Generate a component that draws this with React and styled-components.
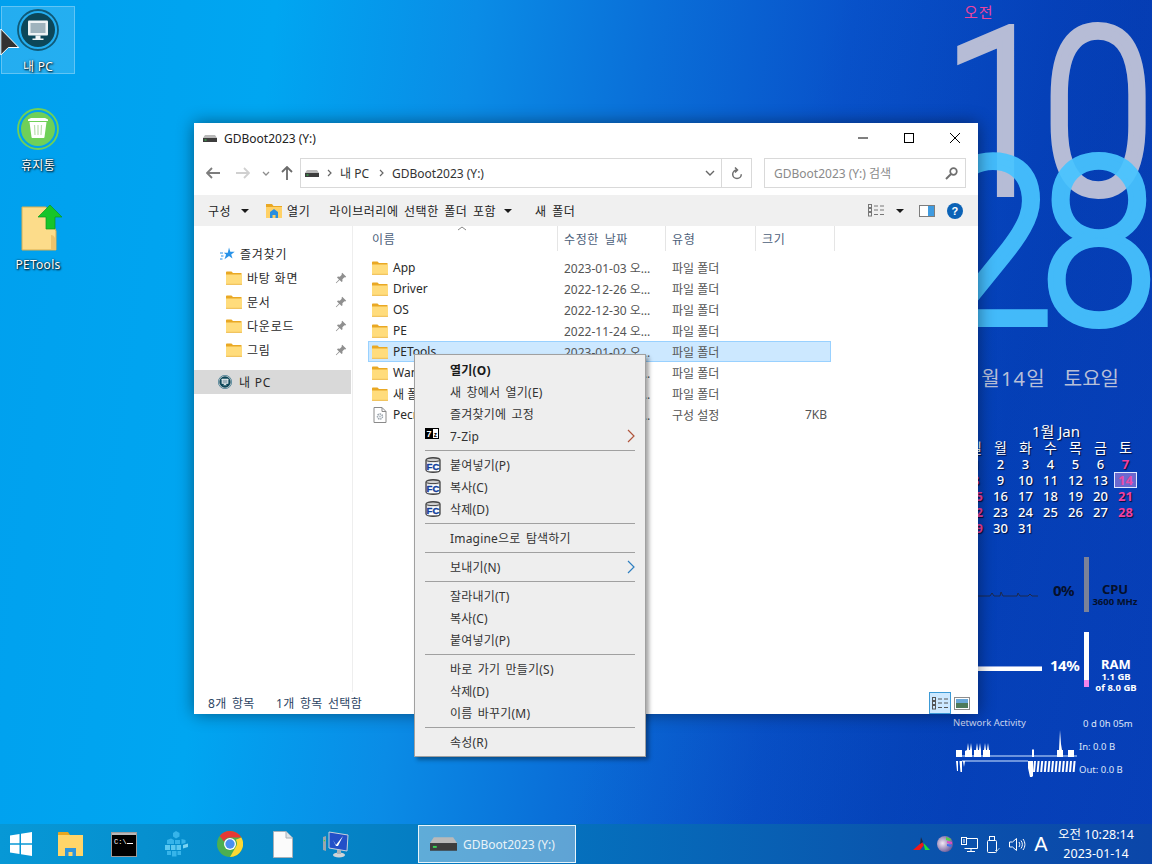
import React from 'react';
import styled, { createGlobalStyle } from 'styled-components';

const UI_FONT = '"Noto Sans", "Noto Sans CJK KR", sans-serif';

const GlobalStyle = createGlobalStyle`
  html, body { margin: 0; padding: 0; width: 1152px; height: 864px; overflow: hidden; }
  * { box-sizing: border-box; }
  body { font-family: ${UI_FONT}; font-size: 12px; }
`;

const Desktop = styled.div`
  position: relative;
  width: 1152px;
  height: 864px;
  overflow: hidden;
  background:
    linear-gradient(108deg, transparent 0 58%, rgba(0, 30, 120, 0.12) 80%, transparent 100%),
    linear-gradient(97deg, #00a0ee 0%, #00a6f1 22%, #0a8ce6 38%, #0a6fd8 52%, #0852ca 68%, #0544bf 84%, #073fb8 100%);
`;

/* desktop icons */
const IconColumn = styled.div`
  position: absolute;
  left: 1px;
  top: 6px;
  width: 74px;
  display: flex;
  flex-direction: column;
  gap: 31px;
`;
const DesktopIcon = styled.div`
  height: 68px;
  display: flex;
  flex-direction: column;
  align-items: center;
  justify-content: space-between;
  padding: 2px 0 0;
  border: 1px solid ${(p) => (p.$selected ? 'rgba(255,255,255,.28)' : 'transparent')};
  background: ${(p) => (p.$selected ? 'rgba(255,255,255,.14)' : 'transparent')};
`;
const DesktopLabel = styled.span`
  color: #fff;
  font-size: 12px;
  line-height: 14px;
  margin-bottom: -1px;
  letter-spacing: 0.3px;
  text-shadow: 1px 1px 2px #000, 0 0 2px rgba(0, 0, 0, 0.7);
`;
const ToolsGlyph = styled.svg`
  margin: -2px 0 0 8px;
  flex: none;
`;
const Cursor = styled.svg`
  position: absolute;
  left: 0;
  top: 28px;
`;

/* clock and system widgets, they sit on the wallpaper */
const BigHour = styled.div`
  position: absolute;
  left: 942px;
  top: -2px;
  font: 300 233px/233px Roboto, sans-serif;
  letter-spacing: -16.5px;
  color: #b6bcd6;
  -webkit-text-stroke: 6px #b6bcd6;
  transform: scaleX(0.88);
  transform-origin: 0 0;
  white-space: nowrap;
`;
const BigMinute = styled.div`
  position: absolute;
  left: 935px;
  top: 128px;
  font: 300 233px/233px Roboto, sans-serif;
  letter-spacing: -16px;
  color: #48c4ff;
  -webkit-text-stroke: 6px #48c4ff;
  opacity: 0.93;
  transform: scaleX(0.92);
  transform-origin: 0 0;
  white-space: nowrap;
`;
const AmPm = styled.div`
  position: absolute;
  left: 964px;
  top: 1px;
  font-size: 15px;
  line-height: 22px;
  letter-spacing: 1px;
  color: #f0439c;
`;
const DateLine = styled.div`
  position: absolute;
  left: 956px;
  top: 365px;
  display: flex;
  gap: 18px;
  font-size: 20px;
  line-height: 28px;
  white-space: nowrap;
  color: #b7bfd8;
`;
const DatePart = styled.span`
  letter-spacing: ${(p) => p.$spacing || 0}px;
`;
const Calendar = styled.div`
  position: absolute;
  left: 963px;
  top: 422px;
  width: 175px;
  color: #fff;
  text-shadow: 1px 1px 1px rgba(0, 0, 30, 0.8);
`;
const CalendarTitle = styled.div`
  font-size: 15px;
  line-height: 18px;
  text-align: center;
  padding-left: 11px;
`;
const CalendarGrid = styled.div`
  display: grid;
  grid-template-columns: repeat(7, 25px);
  grid-auto-rows: 16px;
  font-size: 13px;
  line-height: 16px;
  text-align: center;
`;
const CalendarHead = styled.span`
  font-size: 14px;
`;
const CalendarDay = styled.span`
  position: relative;
  font-weight: ${(p) => (p.$holiday ? 700 : 500)};
  color: ${(p) => (p.$holiday ? '#f2409f' : '#fff')};
  ${(p) =>
    p.$today &&
    `
    color: #e84aa8;
    text-shadow: none;
    background: rgba(168, 130, 222, .62);
    outline: 1px solid #e2e8ff;
    outline-offset: -1px;
    margin: 0 1px;
  `}
`;

const CpuGraph = styled.svg`
  position: absolute;
  left: 960px;
  top: 585px;
`;
const RamGraph = styled.svg`
  position: absolute;
  left: 960px;
  top: 666px;
`;
const UsagePercent = styled.div`
  position: absolute;
  left: ${(p) => p.$left}px;
  top: ${(p) => p.$top}px;
  font: 700 15px/22px "Noto Sans", sans-serif;
  letter-spacing: -0.5px;
  color: ${(p) => p.$color};
`;
const UsageBar = styled.div`
  position: absolute;
  left: 1084px;
  top: ${(p) => p.$top}px;
  width: 5px;
  height: 55px;
  background: ${(p) => p.$track};
`;
const UsageFill = styled.div`
  position: absolute;
  left: 0;
  right: 0;
  bottom: 0;
  height: 7px;
  background: #f284ea;
`;
const MeterLabel = styled.div`
  position: absolute;
  left: ${(p) => p.$left}px;
  top: ${(p) => p.$top}px;
  width: 60px;
  text-align: center;
  color: ${(p) => p.$color};
  font-weight: 700;
  line-height: 11px;
  font-size: 9.5px;
`;
const MeterName = styled.div`
  font-size: 13px;
  line-height: 13px;
`;
const NetworkTitle = styled.div`
  position: absolute;
  left: 953px;
  top: 716px;
  font-size: 9.5px;
  line-height: 14px;
  color: #c9d3ee;
`;
const NetworkText = styled.div`
  position: absolute;
  left: ${(p) => p.$left}px;
  top: ${(p) => p.$top}px;
  font-size: 9.5px;
  line-height: 14px;
  color: #dfe6f8;
`;
const NetworkGraph = styled.svg`
  position: absolute;
  left: 956px;
  top: 725px;
`;

/* explorer window */
const ExplorerWindow = styled.div`
  position: absolute;
  left: 194px;
  top: 123px;
  width: 784px;
  height: 591px;
  background: #fff;
  box-shadow: 0 0 16px rgba(0, 0, 0, 0.45);
  display: flex;
  flex-direction: column;
  color: #1e1e1e;
`;
const TitleBar = styled.div`
  height: 30px;
  flex: none;
  display: flex;
  align-items: center;
  padding-left: 9px;
  gap: 7px;
  font-size: 12px;
`;
const TitleText = styled.span`
  flex: 1;
  color: #222;
`;
const WindowControls = styled.div`
  display: flex;
`;
const WindowButton = styled.div`
  width: 46px;
  height: 30px;
  display: flex;
  align-items: center;
  justify-content: center;
`;
const NavRow = styled.div`
  height: 42px;
  flex: none;
  display: flex;
  align-items: flex-start;
  padding: 5px 12px 0 4px;
`;
const NavButton = styled.div`
  width: ${(p) => p.$width}px;
  height: 30px;
  display: flex;
  align-items: center;
  justify-content: center;
`;
const AddressBox = styled.div`
  width: 452px;
  height: 30px;
  margin-right: 12px;
  border: 1px solid #d9d9d9;
  display: flex;
  align-items: center;
  padding-left: 4px;
`;
const Crumb = styled.span`
  color: #333;
  margin: 0 10px 0 8px;
`;
const CrumbArrow = styled.svg`
  flex: none;
  margin-left: ${(p) => p.$lead || 0}px;
`;
const AddressEnd = styled.div`
  margin-left: auto;
  display: flex;
  height: 100%;
  align-items: center;
`;
const AddressTool = styled.div`
  width: ${(p) => p.$width}px;
  height: 100%;
  display: flex;
  align-items: center;
  justify-content: center;
  border-left: ${(p) => (p.$split ? '1px solid #d9d9d9' : '0')};
`;
const SearchBox = styled.div`
  width: 202px;
  height: 30px;
  border: 1px solid #d9d9d9;
  display: flex;
  align-items: center;
  justify-content: space-between;
  padding: 0 7px 0 9px;
  color: #8a8a8a;
`;
const CommandBar = styled.div`
  height: 31px;
  flex: none;
  background: #f0f0f0;
  display: flex;
  align-items: center;
  padding: 0 15px 0 14px;
  color: #222;
  word-spacing: 2px;
  letter-spacing: 0.5px;
`;
const Command = styled.div`
  display: flex;
  align-items: center;
  gap: ${(p) => p.$gap || 8}px;
  margin-right: ${(p) => p.$after || 0}px;
`;
const Caret = styled.span`
  width: 0;
  height: 0;
  margin: ${(p) => p.$margin || 0};
  border-left: 4px solid transparent;
  border-right: 4px solid transparent;
  border-top: 4px solid #1a1a1a;
`;
const CommandTools = styled.div`
  margin-left: auto;
  display: flex;
  align-items: center;
`;
const PaneGlyph = styled.svg`
  margin-right: 12px;
`;
const ViewBody = styled.div`
  flex: 1;
  min-height: 0;
  display: flex;
`;
const Sidebar = styled.div`
  width: 159px;
  flex: none;
  padding-top: 16px;
  border-right: 1px solid #eeeeee;
`;
const NavGroup = styled.div`
  margin-bottom: 8px;
`;
const SidebarRow = styled.div`
  height: 24px;
  width: 157px;
  display: flex;
  align-items: center;
  gap: ${(p) => p.$gap || 5}px;
  padding-left: ${(p) => p.$indent}px;
  padding-right: 4px;
  background: ${(p) => (p.$active ? '#d9d9d9' : 'transparent')};
  color: #2a2a2a;
  letter-spacing: 0.8px;
`;
const SidebarName = styled.span`
  flex: 1;
`;
const FilePane = styled.div`
  flex: 1;
  display: flex;
  flex-direction: column;
  position: relative;
`;
const HeaderRow = styled.div`
  height: 25px;
  display: flex;
  color: #4c607a;
  letter-spacing: 0.6px;
`;
const HeaderCell = styled.div`
  width: ${(p) => p.$width}px;
  height: 100%;
  padding-left: ${(p) => p.$pad}px;
  display: flex;
  align-items: center;
  border-right: 1px solid #e5e5e5;
  word-spacing: 2px;
`;
const SortMark = styled.svg`
  position: absolute;
  left: 104px;
  top: 0;
`;
const FileList = styled.div`
  padding: 6px 0 0 15px;
`;
const FileRow = styled.div`
  width: 463px;
  height: 21px;
  display: flex;
  align-items: center;
  padding-left: 3px;
  border: 1px solid ${(p) => (p.$selected ? '#99d1ff' : 'transparent')};
  background: ${(p) => (p.$selected ? '#cce8ff' : 'transparent')};
  color: #555;
`;
const FileName = styled.span`
  width: 176px;
  padding-left: 5px;
  flex: none;
  color: #2a2a2a;
`;
const FileDate = styled.span`
  width: 92px;
  margin-right: 16px;
  flex: none;
  white-space: nowrap;
  overflow: hidden;
  text-overflow: ellipsis;
`;
const FileType = styled.span`
  width: 90px;
  flex: none;
`;
const FileSize = styled.span`
  flex: 1;
  text-align: right;
  padding-right: 3px;
`;
const StatusBar = styled.div`
  height: 22px;
  flex: none;
  display: flex;
  align-items: center;
  padding-left: 14px;
  color: #2c4463;
  word-spacing: 2px;
  letter-spacing: 0.3px;
`;
const StatusText = styled.span`
  width: ${(p) => p.$width}px;
`;
const StatusViews = styled.div`
  margin-left: auto;
  display: flex;
  align-items: center;
  padding-right: 5px;
`;
const ViewToggle = styled.div`
  width: 22px;
  height: 22px;
  display: flex;
  align-items: center;
  justify-content: center;
  border: 1px solid ${(p) => (p.$on ? '#3c9ad6' : 'transparent')};
  background: ${(p) => (p.$on ? '#cce8ff' : 'transparent')};
`;

/* context menu */
const ContextMenu = styled.div`
  position: absolute;
  left: 414px;
  top: 354px;
  width: 232px;
  height: 403px;
  padding: 4px 10px 0;
  background: #eeeeee;
  border: 1px solid #a0a0a0;
  box-shadow: 3px 3px 4px rgba(0, 0, 0, 0.35);
  color: #333;
`;
const MenuItem = styled.div`
  position: relative;
  height: 22px;
  display: flex;
  align-items: center;
  padding-left: 25px;
  font-weight: ${(p) => (p.$strong ? 700 : 400)};
  color: ${(p) => (p.$strong ? '#1a1a1a' : '#333')};
  word-spacing: 2px;
  letter-spacing: 0.2px;
`;
const MenuIcon = styled.span`
  position: absolute;
  left: 0;
  top: 3px;
  display: flex;
`;
const MenuArrow = styled.svg`
  position: absolute;
  right: 0;
  top: 4px;
`;
const MenuRule = styled.div`
  height: 1px;
  margin: 3px 0;
  background: #a0a0a0;
`;

/* taskbar */
const Taskbar = styled.div`
  position: absolute;
  left: 0;
  right: 0;
  bottom: 0;
  height: 40px;
  display: flex;
  align-items: center;
  background: linear-gradient(90deg, #0798d6 0%, #0588c8 25%, #0570bd 50%, #0a55ad 78%, #0b46a9 100%);
`;
const StartButton = styled.div`
  width: 44px;
  height: 100%;
  flex: none;
  display: flex;
  align-items: center;
  justify-content: center;
  padding-right: 3px;
`;
const TaskIcon = styled.div`
  width: 53px;
  height: 100%;
  flex: none;
  display: flex;
  align-items: center;
  justify-content: center;
`;
const ActiveTask = styled.div`
  width: 158px;
  height: 38px;
  margin-left: 56px;
  flex: none;
  display: flex;
  align-items: center;
  gap: 6px;
  padding-left: 11px;
  background: rgba(255, 255, 255, 0.36);
  border: 1px solid #e8f4fa;
  color: #e9f3f8;
`;
const Tray = styled.div`
  margin-left: auto;
  height: 100%;
  display: flex;
  align-items: center;
`;
const TraySlot = styled.div`
  width: ${(p) => p.$width}px;
  display: flex;
  justify-content: center;
  color: #fff;
`;
const TrayLetter = styled.span`
  font: 400 20px/24px "Liberation Sans", sans-serif;
`;
const TrayClock = styled.div`
  width: 84px;
  margin: 0 14px 0 1px;
  text-align: center;
  white-space: nowrap;
  color: #fff;
  font-size: 12.5px;
  line-height: 19px;
`;

const DriveIcon = ({ w = 14, h = 7 }) => (
  <svg width={w} height={h} viewBox="0 0 14 7">
    <path d="M2 0h10l2 3H0z" fill="#b9b9b9" />
    <rect y="3" width="14" height="4" fill="#3d3d3d" />
    <rect x="1.500" y="4.500" width="2" height="1" fill="#39d353" />
  </svg>
);

const FolderIcon = ({ w = 16, h = 14 }) => (
  <svg width={w} height={h} viewBox="0 0 16 14">
    <path d="M0 1.500C0 .8.5.5 1 .5h4.500L7 2h8.500v2H0z" fill="#e9a824" />
    <path d="M0 3.600h16V13c0 .5-.3.8-.8.8H.8C.3 13.800 0 13.500 0 13z" fill="#ffdc7c" />
    <path d="M0 12.800h16v1H0z" fill="#eebc52" />
  </svg>
);

const PinIcon = () => (
  <svg width="12" height="12" viewBox="0 0 12 12">
    <path d="M7.200.8l4 4-1 .8-.8-.3-2 2 .1 1.900-.9.9-2-2-3.300 3.200-.5-.5L4 7.500l-2-2 .9-.9 1.900.1 2-2-.3-.8z" fill="#8f8f8f" />
  </svg>
);

const StarIcon = () => (
  <svg width="15" height="14" viewBox="0 0 15 14">
    <path d="M9 .5l1.300 4.200 4.400.1-3.500 2.600 1.300 4.200L9 9.100l-4.500 3.100 1.600-4.700-2.300-1.700 4-.1z" fill="#2a93e8" />
    <path d="M0 6h3M1 9h2.500M0 12h2.500" stroke="#2a93e8" strokeWidth="1" />
  </svg>
);

const PcBadge = ({ size = 42 }) => (
  <svg width={size} height={size} viewBox="0 0 42 42">
    <circle cx="21" cy="21" r="20" fill="none" stroke="#0f5a78" strokeWidth="1.800" />
    <circle cx="21" cy="21" r="17" fill="#0c4759" />
    <rect x="11" y="11.500" width="20" height="15" rx="1" fill="#eef3f5" />
    <rect x="13.500" y="14" width="15" height="10" fill="#9fb3bd" />
    <path d="M18.500 26.500h5v3h3v1.500h-11v-1.500h3z" fill="#eef3f5" />
  </svg>
);

const TrashBadge = () => (
  <svg width="42" height="42" viewBox="0 0 42 42">
    <circle cx="21" cy="21" r="20" fill="none" stroke="#6fd058" strokeWidth="1.800" />
    <circle cx="21" cy="21" r="17" fill="#6fd058" />
    <path d="M11 11.500l3-1.500h14l3 1.500v1.500H11z" fill="#fff" />
    <path d="M12.500 14h17l-2 15c0 .7-.6 1-1.200 1H15.700c-.6 0-1.200-.3-1.200-1z" fill="#fff" />
    <path d="M17.500 17l.5 10M21 17v10M24.500 17l-.5 10" stroke="#b9dfae" strokeWidth="1.200" />
  </svg>
);

const ToolsShortcut = () => (
  <ToolsGlyph width="42" height="46" viewBox="0 0 42 46">
    <path d="M1 2h24l10 24v19H1z" fill="#fcdc8a" stroke="#d8ae50" strokeWidth="1" />
    <path d="M30 30c2 0 3 1 4 3l1 12h-5z" fill="#ecc36c" />
    <path d="M29 0l12 12h-7v12h-9V12h-8z" fill="#16c52a" stroke="#0c9a1c" strokeWidth=".7" />
  </ToolsGlyph>
);

const FileCog = () => (
  <svg width="16" height="16" viewBox="-1.500 0 16 16">
    <path d="M.5.5h8l4 4v11H.5z" fill="#fff" stroke="#8a8a8a" />
    <path d="M8.500.5v4h4" fill="none" stroke="#8a8a8a" />
    <circle cx="6.500" cy="9.500" r="2.500" fill="none" stroke="#98a2ab" strokeWidth="1.500" strokeDasharray="1.500 .7" />
    <circle cx="6.500" cy="9.500" r="1" fill="#b8c0c8" />
  </svg>
);

const FcIcon = () => (
  <svg width="16" height="16" viewBox="0 0 16 16">
    <path d="M1 3c0-3 14-3 14 0v10c0 3-14 3-14 0z" fill="#cfcfcf" stroke="#444" strokeWidth="1.300" />
    <path d="M1.500 3.500c2 1.500 11 1.500 13 0" fill="none" stroke="#444" />
    <rect x="2" y="5.500" width="12" height="8.500" fill="#fff" />
    <text x="8" y="13" textAnchor="middle" fontFamily="Liberation Sans, sans-serif" fontWeight="700" fontSize="9.500" stroke="#123e9c" strokeWidth=".4" fill="#123e9c">FC</text>
  </svg>
);

const SevenZipIcon = () => (
  <svg width="14" height="11" viewBox="0 0 14 11">
    <rect width="14" height="11" fill="#000" />
    <rect x="8" y="1" width="5" height="9" fill="#fff" />
    <text x="4" y="9" textAnchor="middle" fontFamily="Liberation Sans, sans-serif" fontWeight="700" fontSize="9" fill="#fff">7</text>
    <text x="10.500" y="8.500" textAnchor="middle" fontFamily="Liberation Sans, sans-serif" fontWeight="700" fontSize="6.500" fill="#000">z</text>
  </svg>
);

const OpenFolderIcon = () => (
  <svg width="16" height="16" viewBox="0 0 16 16">
    <path d="M0 1h6l1.500 2H16v3H0z" fill="#e9a824" />
    <path d="M0 4h16v11H0z" fill="#ffd166" />
    <path d="M4 15v-6l4-3 4 3v6H9.500v-3h-3v3z" fill="#2a8fe0" />
  </svg>
);

const DetailsGlyph = ({ color = '#777' }) => (
  <svg width="16" height="13" viewBox="0 0 16 13">
    <g fill="none" stroke={color}>
      <rect x=".5" y=".5" width="3" height="3" />
      <rect x=".5" y="4.500" width="3" height="3" />
      <rect x=".5" y="8.500" width="3" height="3.500" />
      <path d="M6 2h4M12 2h4M6 6h4M12 6h4M6 10.500h4M12 10.500h4" />
    </g>
  </svg>
);

const Nav = {
  Back: () => (
    <svg width="14" height="12" viewBox="0 0 14 12">
      <path d="M6 1L1 6l5 5M1 6h13" fill="none" stroke="#7d7d7d" strokeWidth="1.800" />
    </svg>
  ),
  Forward: () => (
    <svg width="14" height="12" viewBox="0 0 14 12">
      <path d="M8 1l5 5-5 5M13 6H0" fill="none" stroke="#d0d0d0" strokeWidth="1.800" />
    </svg>
  ),
  Recent: () => (
    <svg width="8" height="5" viewBox="0 0 8 5">
      <path d="M1 1l3 3 3-3" fill="none" stroke="#8d8d8d" strokeWidth="1.300" />
    </svg>
  ),
  Up: () => (
    <svg width="12" height="14" viewBox="0 0 12 14">
      <path d="M1 6l5-5 5 5M6 1v13" fill="none" stroke="#6b6b6b" strokeWidth="1.800" />
    </svg>
  ),
};

const WindowsLogo = () => (
  <svg width="22" height="24" viewBox="0 0 22 24">
    <path d="M0 3.500L9.500 2v9.300H0zM11 1.700L22 0v11.300H11zM0 12.700h9.500V22L0 20.500zM11 12.700h11V24l-11-1.800z" fill="#fff" />
  </svg>
);

const ExplorerTaskIcon = () => (
  <svg width="25" height="24" viewBox="0 0 25 24">
    <path d="M0 1c0-.6.4-1 1-1h9l2 3v3H0z" fill="#e8a61f" />
    <path d="M0 3h25v21H0z" fill="#ffd569" />
    <path d="M7 24v-8h11v8h-3.500v-4h-4v4z" fill="#2f95dc" />
  </svg>
);

const CmdIcon = () => (
  <svg width="26" height="25" viewBox="0 0 26 25">
    <rect x=".5" y=".5" width="25" height="24" fill="#000" stroke="#9a9a9a" />
    <rect x="1" y="1" width="24" height="2" fill="#b8b8b8" />
    <text x="3" y="12" fontFamily="Liberation Mono, monospace" fontSize="7" fill="#fff">C:\</text>
    <rect x="16" y="11" width="6" height="1" fill="#fff" />
  </svg>
);

const CubesIcon = () => (
  <svg width="24" height="27" viewBox="0 0 24 27">
    <g fill="#36b4ea">
      <path d="M11 0l3.500 2v3.500L11 7.500 8 5.500V2z" />
      <path d="M2 9l4-1.500L9 9v4H2zM10 9h5v4h-5zM16.500 8l4 1v3l-4 1z" />
      <path d="M0 14h5v5H0zM6 14h4.500v5H6zM11.500 14H16v5h-4.500z" fill="#5cc8f0" />
      <path d="M2 20h4v4H2zM7 20h4.500v5.500H7zM12.500 20H16v4h-3.500z" />
      <path d="M18 14l5-1.500V16l-5 1.500z" fill="#7ad4f2" />
    </g>
  </svg>
);

const ChromeIcon = () => (
  <svg width="26" height="26" viewBox="0 0 26 26">
    <circle cx="13" cy="13" r="13" fill="#4caf50" />
    <path d="M13 0a13 13 0 0 1 11.300 6.500H13a6.500 6.500 0 0 0-6 4L2.700 5A13 13 0 0 1 13 0z" fill="#e53935" />
    <path d="M24.300 6.500A13 13 0 0 1 13 26l5.600-9.700a6.500 6.500 0 0 0 .2-7.500z" fill="#fdd835" />
    <circle cx="13" cy="13" r="6" fill="#fff" />
    <circle cx="13" cy="13" r="4.700" fill="#4a8ff0" />
  </svg>
);

const PageIcon = () => (
  <svg width="20" height="27" viewBox="0 0 20 27">
    <path d="M.5.500H13l6.500 6.500v19.500H.5z" fill="#fbfbfb" stroke="#a8b0b8" />
    <path d="M13 .5V7h6.500" fill="#dfe3e6" stroke="#a8b0b8" />
  </svg>
);

const MonitorCheckIcon = () => (
  <svg width="26" height="27" viewBox="0 0 26 27">
    <path d="M6 1l19 3-1 16-18-3z" fill="#2350c8" stroke="#c9d2dc" />
    <path d="M10 9l3 5 7-9-5 10h-2z" fill="#fff" />
    <ellipse cx="16" cy="24" rx="6" ry="2.500" fill="#cfd4d8" />
    <path d="M14 19h4v4h-4z" fill="#aab2b8" />
    <path d="M0 6l3-1v15l-3-1z" fill="#9aa6ad" />
    <rect x=".8" y="9" width="1.300" height="1.300" fill="#3ad24a" />
  </svg>
);

const TrayIcons = {
  Antivirus: () => (
    <svg width="17" height="14" viewBox="0 0 17 14">
      <path d="M0 13L9 5l2 3-4 5z" fill="#f01818" />
      <path d="M8 0l2 5-3 2z" fill="#1f2a44" />
      <path d="M10.500 6L17 13h-5z" fill="#22dd33" />
    </svg>
  ),
  Globe: () => (
    <svg width="16" height="16" viewBox="0 0 16 16">
      <defs>
        <radialGradient id="gl" cx=".35" cy=".45" r=".8">
          <stop offset="0" stopColor="#f2e8f4" />
          <stop offset=".6" stopColor="#8a79ae" />
          <stop offset="1" stopColor="#4a3c78" />
        </radialGradient>
      </defs>
      <circle cx="8" cy="8" r="8" fill="url(#gl)" />
      <path d="M9 1l5 2-1 2-4-1z" fill="#52d04a" />
      <path d="M10 5l5 1v2l-5-1z" fill="#e04ac8" />
      <path d="M10 8l5 1-1 2-4-1z" fill="#3a70f0" />
    </svg>
  ),
  Network: () => (
    <svg width="17" height="15" viewBox="0 0 17 15" fill="none" stroke="#fff">
      <path d="M3.500 1.500h13v10h-13M10 11.500v3M6 14.500h8" />
      <rect x=".5" y=".5" width="5" height="7" fill="#0a50ad" />
      <path d="M2 3h2M2 5h2" />
    </svg>
  ),
  Usb: () => (
    <svg width="13" height="17" viewBox="0 0 13 17" fill="none" stroke="#fff">
      <rect x="2.500" y=".5" width="5" height="4" />
      <rect x=".5" y="4.500" width="9" height="12" rx="1" />
      <path d="M8 14l1.500 1.500L12.500 12" stroke="#a8c4de" />
    </svg>
  ),
  Speaker: () => (
    <svg width="17" height="15" viewBox="0 0 17 15" fill="none" stroke="#fff">
      <path d="M.5 5h3L7.500 1.500v12L3.500 10h-3z" />
      <path d="M10 5c1 1.500 1 3.500 0 5M12 3.500c1.800 2.500 1.800 5.500 0 8M14 2c2.500 3.500 2.500 7.500 0 11" />
    </svg>
  ),
};

const folders = [
  { name: 'App', date: '2023-01-03 오전 8:10' },
  { name: 'Driver', date: '2022-12-26 오전 9:12' },
  { name: 'OS', date: '2022-12-30 오전 7:30' },
  { name: 'PE', date: '2022-11-24 오전 6:22' },
  { name: 'PETools', date: '2023-01-02 오전 9:44', selected: true },
  { name: 'Wan', date: '2023-01-02 오전 9:44' },
  { name: '새 폴더', date: '2023-01-14 오전 9:00' },
];

const quickAccess = ['바탕 화면', '문서', '다운로드', '그림'];

const menu = [
  [
    { label: '열기(O)', strong: true },
    { label: '새 창에서 열기(E)' },
    { label: '즐겨찾기에 고정' },
    { label: '7-Zip', icon: <SevenZipIcon />, arrow: '#b0553c' },
  ],
  [
    { label: '붙여넣기(P)', icon: <FcIcon /> },
    { label: '복사(C)', icon: <FcIcon /> },
    { label: '삭제(D)', icon: <FcIcon /> },
  ],
  [{ label: 'Imagine으로 탐색하기' }],
  [{ label: '보내기(N)', arrow: '#2f7fc0' }],
  [{ label: '잘라내기(T)' }, { label: '복사(C)' }, { label: '붙여넣기(P)' }],
  [{ label: '바로 가기 만들기(S)' }, { label: '삭제(D)' }, { label: '이름 바꾸기(M)' }],
  [{ label: '속성(R)' }],
];

const weekdays = ['일', '월', '화', '수', '목', '금', '토'];
const monthDays = Array.from({ length: 31 }, (_, i) => i + 1);

const outBars = Array.from({ length: 12 }, (_, i) => 75 + i * 3.6);

const App = () => (
  <Desktop>
    <GlobalStyle />

    <BigHour>10</BigHour>
    <BigMinute>28</BigMinute>
    <AmPm>오전</AmPm>
    <DateLine>
      <DatePart $spacing={1.2}>01월14일</DatePart>
      <DatePart>토요일</DatePart>
    </DateLine>

    <Calendar>
      <CalendarTitle>1월 Jan</CalendarTitle>
      <CalendarGrid>
        {weekdays.map((d) => (
          <CalendarHead key={d}>{d}</CalendarHead>
        ))}
        {monthDays.map((d) => (
          <CalendarDay key={d} $holiday={d % 7 === 0 || d % 7 === 1} $today={d === 14}>
            {d}
          </CalendarDay>
        ))}
      </CalendarGrid>
    </Calendar>

    <CpuGraph width="82" height="14" viewBox="0 0 82 14">
      <path
        d="M0 11h30l2-3 2 3h6l1-4 2 4h14l1-3 2 3h8l2-2 2 2h6"
        fill="none"
        stroke="#1d2a4c"
        strokeWidth="1"
      />
    </CpuGraph>
    <UsagePercent $left={1053} $top={579} $color="#05102c">0%</UsagePercent>
    <UsageBar $top={557} $track="#7b8298" />
    <MeterLabel $left={1085} $top={583} $color="#05102c">
      <MeterName>CPU</MeterName>
      3600 MHz
    </MeterLabel>

    <RamGraph width="82" height="6" viewBox="0 0 82 6">
      <rect y="0" width="82" height="1" fill="#8fa6e0" />
      <rect y="1" width="82" height="4" fill="#fff" />
    </RamGraph>
    <UsagePercent $left={1050} $top={654} $color="#fff">14%</UsagePercent>
    <UsageBar $top={632} $track="#fff">
      <UsageFill />
    </UsageBar>
    <MeterLabel $left={1086} $top={658} $color="#fff">
      <MeterName>RAM</MeterName>
      1.1 GB
      <br />
      of 8.0 GB
    </MeterLabel>

    <NetworkTitle>Network Activity</NetworkTitle>
    <NetworkText $left={1083} $top={717}>0 d 0h 05m</NetworkText>
    <NetworkText $left={1079} $top={740}>In: 0.0 B</NetworkText>
    <NetworkText $left={1079} $top={763}>Out: 0.0 B</NetworkText>
    <NetworkGraph width="122" height="55" viewBox="0 0 122 55">
      <path d="M6 31h115" stroke="#8fb0ea" strokeWidth="1.500" />
      <path
        d="M0 32v-7h6v7zM9 32v-6l2-1 1-7 1 7h1l1-7 1 7v7zM18 32v-7l2 0 1-7 1 7h1l1-7 1 7v7zM27 32v-7h1l1-7 1 7h1l1-7 1 7h1v7zM76 32v-7l1-1 1 1v7zM101 32v-7h2l1-20 1 14 1 6h1v7zM112 32v-7h6v7z"
        fill="#fff"
      />
      <path d="M6 36h66" stroke="#8fb0ea" strokeWidth="1.500" />
      <path d="M0 36h2v10H1zM3.500 36H6v11H4.500zM7 36h2l-1 6zM72 36h5v15l-1 1h-2l-2-9z" fill="#fff" />
      <g stroke="#fff" strokeWidth="2">
        {outBars.map((x) => (
          <path key={x} d={`M${x + 4} 36l-1 11`} />
        ))}
      </g>
    </NetworkGraph>

    <IconColumn>
      <DesktopIcon $selected>
        <PcBadge />
        <DesktopLabel>내 PC</DesktopLabel>
      </DesktopIcon>
      <DesktopIcon>
        <TrashBadge />
        <DesktopLabel>휴지통</DesktopLabel>
      </DesktopIcon>
      <DesktopIcon>
        <ToolsShortcut />
        <DesktopLabel>PETools</DesktopLabel>
      </DesktopIcon>
    </IconColumn>
    <Cursor width="20" height="28" viewBox="0 0 20 28">
      <path d="M.8 1v26l7.500-7.500h10.500z" fill="#333" stroke="#fff" strokeWidth="1" />
    </Cursor>

    <ExplorerWindow>
      <TitleBar>
        <DriveIcon />
        <TitleText>GDBoot2023 (Y:)</TitleText>
        <WindowControls>
          <WindowButton>
            <svg width="10" height="10" viewBox="0 0 10 10">
              <path d="M0 5h10" stroke="#000" />
            </svg>
          </WindowButton>
          <WindowButton>
            <svg width="10" height="10" viewBox="0 0 10 10">
              <rect x=".5" y=".5" width="9" height="9" fill="none" stroke="#000" />
            </svg>
          </WindowButton>
          <WindowButton>
            <svg width="10" height="10" viewBox="0 0 10 10">
              <path d="M0 0l10 10M10 0L0 10" stroke="#000" />
            </svg>
          </WindowButton>
        </WindowControls>
      </TitleBar>

      <NavRow>
        <NavButton $width={30}><Nav.Back /></NavButton>
        <NavButton $width={30}><Nav.Forward /></NavButton>
        <NavButton $width={16}><Nav.Recent /></NavButton>
        <NavButton $width={26}><Nav.Up /></NavButton>
        <AddressBox>
          <DriveIcon />
          <CrumbArrow width="5" height="8" viewBox="0 0 5 8" $lead={8}>
            <path d="M1 1l3 3-3 3" fill="none" stroke="#666" strokeWidth="1.200" />
          </CrumbArrow>
          <Crumb>내 PC</Crumb>
          <CrumbArrow width="5" height="8" viewBox="0 0 5 8">
            <path d="M1 1l3 3-3 3" fill="none" stroke="#666" strokeWidth="1.200" />
          </CrumbArrow>
          <Crumb>GDBoot2023 (Y:)</Crumb>
          <AddressEnd>
            <AddressTool $width={22}>
              <svg width="10" height="6" viewBox="0 0 10 6">
                <path d="M1 1l4 4 4-4" fill="none" stroke="#666" strokeWidth="1.400" />
              </svg>
            </AddressTool>
            <AddressTool $width={30} $split>
              <svg width="12" height="13" viewBox="0 0 12 13">
                <path d="M6 3a4.300 4.300 0 1 0 4.300 4.300M4 .5L6.500 3 4 5.500" fill="none" stroke="#6f6f6f" strokeWidth="1.500" />
              </svg>
            </AddressTool>
          </AddressEnd>
        </AddressBox>
        <SearchBox>
          <span>GDBoot2023 (Y:) 검색</span>
          <svg width="13" height="13" viewBox="0 0 13 13">
            <circle cx="8.500" cy="4.500" r="3.300" fill="none" stroke="#6f6f6f" strokeWidth="1.700" />
            <path d="M6 7l-5 5" stroke="#6f6f6f" strokeWidth="2" />
          </svg>
        </SearchBox>
      </NavRow>

      <CommandBar>
        <Command $after={17} $gap={10}>구성 <Caret /></Command>
        <Command $after={19} $gap={5}><OpenFolderIcon /> 열기</Command>
        <Command $after={23} $gap={8}>라이브러리에 선택한 폴더 포함 <Caret /></Command>
        <Command>새 폴더</Command>
        <CommandTools>
          <DetailsGlyph />
          <Caret $margin="0 15px 0 12px" />
          <PaneGlyph width="16" height="12" viewBox="0 0 16 12">
            <rect x=".5" y=".5" width="15" height="11" fill="#fff" stroke="#7d7d7d" />
            <rect x="9" y="1" width="6" height="10" fill="#3f9be0" />
          </PaneGlyph>
          <svg width="16" height="16" viewBox="0 0 16 16">
            <circle cx="8" cy="8" r="8" fill="#0b62b6" />
            <text x="8" y="12" textAnchor="middle" fontFamily="Liberation Sans, sans-serif" fontWeight="700" fontSize="11" fill="#fff">?</text>
          </svg>
        </CommandTools>
      </CommandBar>

      <ViewBody>
        <Sidebar>
          <NavGroup>
            <SidebarRow $indent={26}><StarIcon /><SidebarName>즐겨찾기</SidebarName></SidebarRow>
            {quickAccess.map((name) => (
              <SidebarRow key={name} $indent={32}>
                <FolderIcon />
                <SidebarName>{name}</SidebarName>
                <PinIcon />
              </SidebarRow>
            ))}
          </NavGroup>
          <SidebarRow $indent={24} $gap={7} $active>
            <PcBadge size={14} />
            <SidebarName>내 PC</SidebarName>
          </SidebarRow>
        </Sidebar>

        <FilePane>
          <SortMark width="10" height="5" viewBox="0 0 10 5">
            <path d="M1 4l4-3 4 3" fill="none" stroke="#888" />
          </SortMark>
          <HeaderRow>
            <HeaderCell $width={205} $pad={19}>이름</HeaderCell>
            <HeaderCell $width={108} $pad={6}>수정한 날짜</HeaderCell>
            <HeaderCell $width={90} $pad={6}>유형</HeaderCell>
            <HeaderCell $width={79} $pad={6}>크기</HeaderCell>
          </HeaderRow>
          <FileList>
            {folders.map((f) => (
              <FileRow key={f.name} $selected={f.selected}>
                <FolderIcon />
                <FileName>{f.name}</FileName>
                <FileDate>{f.date}</FileDate>
                <FileType>파일 폴더</FileType>
              </FileRow>
            ))}
            <FileRow>
              <FileCog />
              <FileName>Pecmd.ini</FileName>
              <FileDate>2023-01-14 오전 9:00</FileDate>
              <FileType>구성 설정</FileType>
              <FileSize>7KB</FileSize>
            </FileRow>
          </FileList>
        </FilePane>
      </ViewBody>

      <StatusBar>
        <StatusText $width={68}>8개 항목</StatusText>
        <StatusText $width={100}>1개 항목 선택함</StatusText>
        <StatusViews>
          <ViewToggle $on><DetailsGlyph color="#555" /></ViewToggle>
          <ViewToggle>
            <svg width="16" height="13" viewBox="0 0 16 13">
              <rect x=".5" y=".5" width="15" height="12" fill="#fff" stroke="#8d8d8d" />
              <rect x="2" y="2" width="12" height="4" fill="#6aa8d8" />
              <rect x="2" y="6" width="12" height="5" fill="#4d7a5a" />
            </svg>
          </ViewToggle>
        </StatusViews>
      </StatusBar>
    </ExplorerWindow>

    <ContextMenu>
      {menu.map((group, i) => (
        <React.Fragment key={i}>
          {i > 0 && <MenuRule />}
          {group.map((item) => (
            <MenuItem key={item.label} $strong={item.strong}>
              {item.icon && <MenuIcon>{item.icon}</MenuIcon>}
              {item.label}
              {item.arrow && (
                <MenuArrow width="8" height="14" viewBox="0 0 8 14">
                  <path d="M1 1l6 6-6 6" fill="none" stroke={item.arrow} strokeWidth="1.200" />
                </MenuArrow>
              )}
            </MenuItem>
          ))}
        </React.Fragment>
      ))}
    </ContextMenu>

    <Taskbar>
      <StartButton><WindowsLogo /></StartButton>
      <TaskIcon><ExplorerTaskIcon /></TaskIcon>
      <TaskIcon><CmdIcon /></TaskIcon>
      <TaskIcon><CubesIcon /></TaskIcon>
      <TaskIcon><ChromeIcon /></TaskIcon>
      <TaskIcon><PageIcon /></TaskIcon>
      <TaskIcon><MonitorCheckIcon /></TaskIcon>
      <ActiveTask>
        <DriveIcon w={27} h={14} />
        GDBoot2023 (Y:)
      </ActiveTask>
      <Tray>
        <TraySlot $width={24}><TrayIcons.Antivirus /></TraySlot>
        <TraySlot $width={24}><TrayIcons.Globe /></TraySlot>
        <TraySlot $width={24}><TrayIcons.Network /></TraySlot>
        <TraySlot $width={24}><TrayIcons.Usb /></TraySlot>
        <TraySlot $width={24}><TrayIcons.Speaker /></TraySlot>
        <TraySlot $width={24}><TrayLetter>A</TrayLetter></TraySlot>
        <TrayClock>
          오전 10:28:14
          <br />
          2023-01-14
        </TrayClock>
      </Tray>
    </Taskbar>
  </Desktop>
);

export default App;
